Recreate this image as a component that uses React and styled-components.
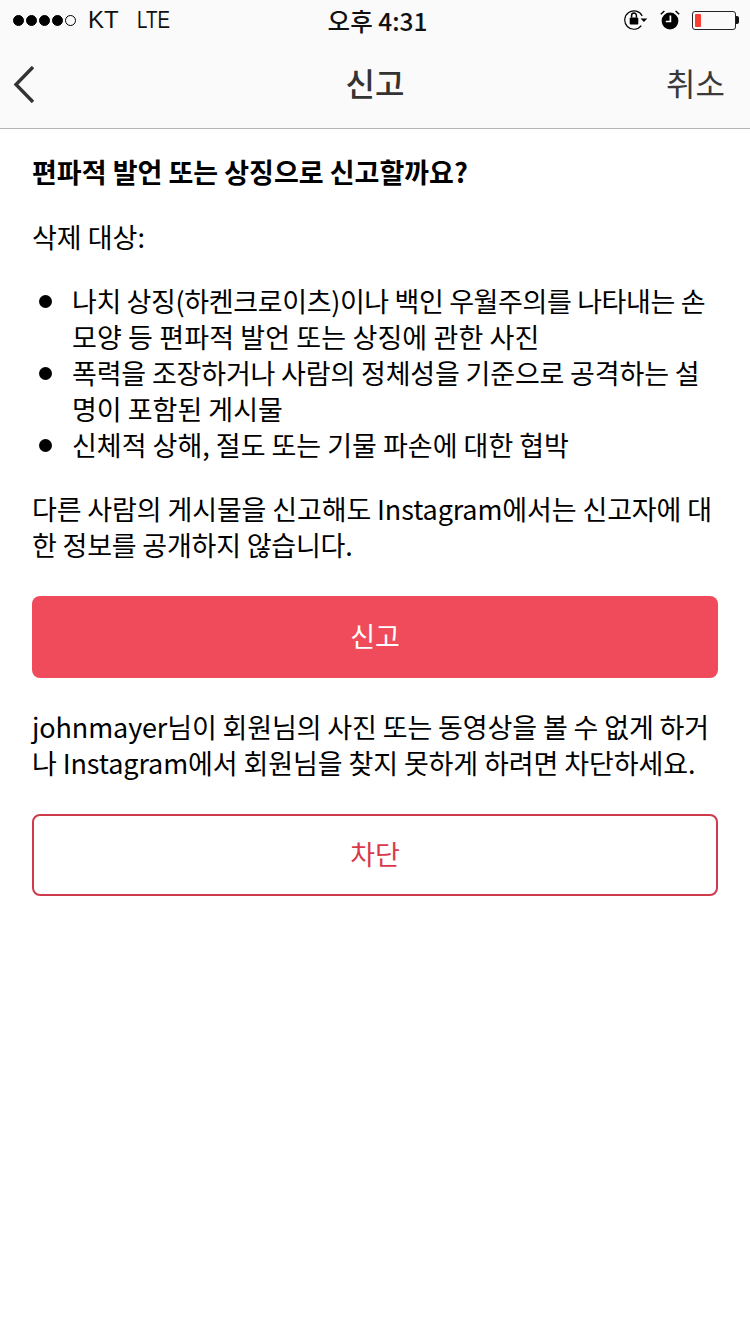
import React from 'react'
import styled, { createGlobalStyle } from 'styled-components'

const GlobalStyle = createGlobalStyle`
  html, body {
    margin: 0;
    padding: 0;
    background: #fff;
  }
  * { box-sizing: border-box; }
`

const Page = styled.div`
  width: 750px;
  height: 1334px;
  background: #fff;
  color: #000;
  font-family: "Noto Sans CJK KR", "Liberation Sans", sans-serif;
  overflow: hidden;
`

const Header = styled.header`
  height: 129px;
  background: #fafafa;
  border-bottom: 1px solid #b4b4b4;
`

const StatusBar = styled.div`
  height: 40px;
  display: grid;
  grid-template-columns: 1fr auto 1fr;
  align-items: center;
  padding: 0 11px 0 13px;
`

const Carrier = styled.div`
  display: flex;
  align-items: center;
  font-family: "Liberation Sans", sans-serif;
  font-size: 24px;
  color: #111;
`

const Signal = styled.span`
  display: flex;
  gap: 2px;
  margin-right: 12px;
`

const Dot = styled.i`
  width: 11px;
  height: 11px;
  border-radius: 50%;
  background: ${p => (p.$off ? 'transparent' : '#000')};
  border: 1px solid #000;
`

const Network = styled.span`
  display: inline-block;
  margin-left: 18px;
  transform: scaleX(0.78);
  transform-origin: left center;
`

const Clock = styled.div`
  margin-left: 3px;
  font-size: 24.5px;
  font-weight: 500;
  color: #111;
`

const StatusIcons = styled.div`
  display: flex;
  justify-content: flex-end;
  align-items: center;
  gap: 12px;
`

const Battery = styled.div`
  display: flex;
  align-items: center;
`

const BatteryBody = styled.div`
  width: 44px;
  height: 19px;
  border: 1px solid #222;
  border-radius: 3px;
  padding: 2px;
`

const BatteryLevel = styled.div`
  width: 6px;
  height: 100%;
  background: #fb3e32;
  border-radius: 1px;
`

const BatteryTip = styled.div`
  width: 3px;
  height: 8px;
  background: #111;
  border-radius: 0 2px 2px 0;
`

const NavBar = styled.nav`
  height: 88px;
  display: grid;
  grid-template-columns: 1fr auto 1fr;
  align-items: center;
  padding: 0 25px 4px;
`

const BackButton = styled.div`
  display: flex;
  align-items: center;
  margin: 5px 0 0 -12px;
`

const Title = styled.h1`
  margin: 0;
  font-size: 32px;
  font-weight: 500;
  color: #333;
`

const Cancel = styled.div`
  text-align: right;
  font-size: 32px;
  font-weight: 400;
  color: #3a3a3a;
`

const Content = styled.main`
  padding: 25px 32px 0;
`

const Heading = styled.h2`
  margin: 0 0 29px;
  font-size: 27px;
  line-height: 36px;
  font-weight: 700;
`

const Text = styled.p`
  margin: 0 0 ${p => p.$gap || 0}px;
  font-size: 27px;
  line-height: 36px;
  font-weight: 400;
`

const Line = styled.span`
  display: block;
  white-space: nowrap;
  letter-spacing: ${p => p.$track || 0}px;
`

const List = styled.ul`
  margin: 0 0 28px;
  padding: 0;
  list-style: none;
`

const Item = styled.li`
  position: relative;
  padding-left: 40px;
  font-size: 27px;
  line-height: 36px;
  &::before {
    content: "";
    position: absolute;
    left: 7px;
    top: 12px;
    width: 13px;
    height: 13px;
    border-radius: 50%;
    background: #000;
  }
`

const Button = styled.div`
  height: 82px;
  display: flex;
  align-items: center;
  justify-content: center;
  padding-bottom: 4px;
  border-radius: 8px;
  font-size: 27px;
  background: ${p => (p.$outline ? '#fff' : '#ef4b5a')};
  color: ${p => (p.$outline ? '#d9394a' : '#fff')};
  border: ${p => (p.$outline ? '2px solid #cf3b4c' : 'none')};
  margin-bottom: ${p => p.$gap || 0}px;
`

const RotationIcon = () => (
  <svg width="24" height="20" viewBox="0 0 24 20">
    <path d="M17.3 15.6A9.2 9.2 0 1 1 18.2 6" fill="none" stroke="#000" strokeWidth="1.2" />
    <path d="M16.5 8.4h6.8l-3.4 3.6z" fill="#000" />
    <rect x="5.7" y="7.6" width="8.6" height="7" rx="1" fill="#000" />
    <path d="M7.6 7.6V5.4a2.4 2.4 0 0 1 4.8 0v2.2" fill="none" stroke="#000" strokeWidth="1.5" />
  </svg>
)

const AlarmIcon = () => (
  <svg width="20" height="20" viewBox="0 0 20 20">
    <circle cx="10" cy="11" r="8.4" fill="#000" />
    <path d="M10.4 5.5v6H5.8" fill="none" stroke="#fff" strokeWidth="1.7" />
    <path d="M.8 4.2 4.4 1M19.2 4.2 15.6 1" fill="none" stroke="#000" strokeWidth="1.5" />
  </svg>
)

const BackIcon = () => (
  <svg width="21" height="37" viewBox="0 0 21 37">
    <path d="M20 1 3 18.5 20 36" fill="none" stroke="#333" strokeWidth="3.4" />
  </svg>
)

export default function App() {
  return (
    <Page>
      <GlobalStyle />
      <Header>
        <StatusBar>
          <Carrier>
            <Signal>
              <Dot /><Dot /><Dot /><Dot /><Dot $off />
            </Signal>
            KT
            <Network>LTE</Network>
          </Carrier>
          <Clock>오후 4:31</Clock>
          <StatusIcons>
            <RotationIcon />
            <AlarmIcon />
            <Battery>
              <BatteryBody><BatteryLevel /></BatteryBody>
              <BatteryTip />
            </Battery>
          </StatusIcons>
        </StatusBar>
        <NavBar>
          <BackButton><BackIcon /></BackButton>
          <Title>신고</Title>
          <Cancel>취소</Cancel>
        </NavBar>
      </Header>
      <Content>
        <Heading>편파적 발언 또는 상징으로 신고할까요?</Heading>
        <Text $gap={28}>삭제 대상:</Text>
        <List>
          <Item>
            <Line $track={-0.37}>나치 상징(하켄크로이츠)이나 백인 우월주의를 나타내는 손</Line>
            <Line $track={0.12}>모양 등 편파적 발언 또는 상징에 관한 사진</Line>
          </Item>
          <Item>
            <Line $track={-0.17}>폭력을 조장하거나 사람의 정체성을 기준으로 공격하는 설</Line>
            <Line>명이 포함된 게시물</Line>
          </Item>
          <Item>
            <Line>신체적 상해, 절도 또는 기물 파손에 대한 협박</Line>
          </Item>
        </List>
        <Text $gap={33}>
          <Line $track={-0.12}>다른 사람의 게시물을 신고해도 Instagram에서는 신고자에 대</Line>
          <Line $track={-0.2}>한 정보를 공개하지 않습니다.</Line>
        </Text>
        <Button $gap={31}>신고</Button>
        <Text $gap={33}>
          <Line $track={-0.12}>johnmayer님이 회원님의 사진 또는 동영상을 볼 수 없게 하거</Line>
          <Line $track={-0.1}>나 Instagram에서 회원님을 찾지 못하게 하려면 차단하세요.</Line>
        </Text>
        <Button $outline>차단</Button>
      </Content>
    </Page>
  )
}
